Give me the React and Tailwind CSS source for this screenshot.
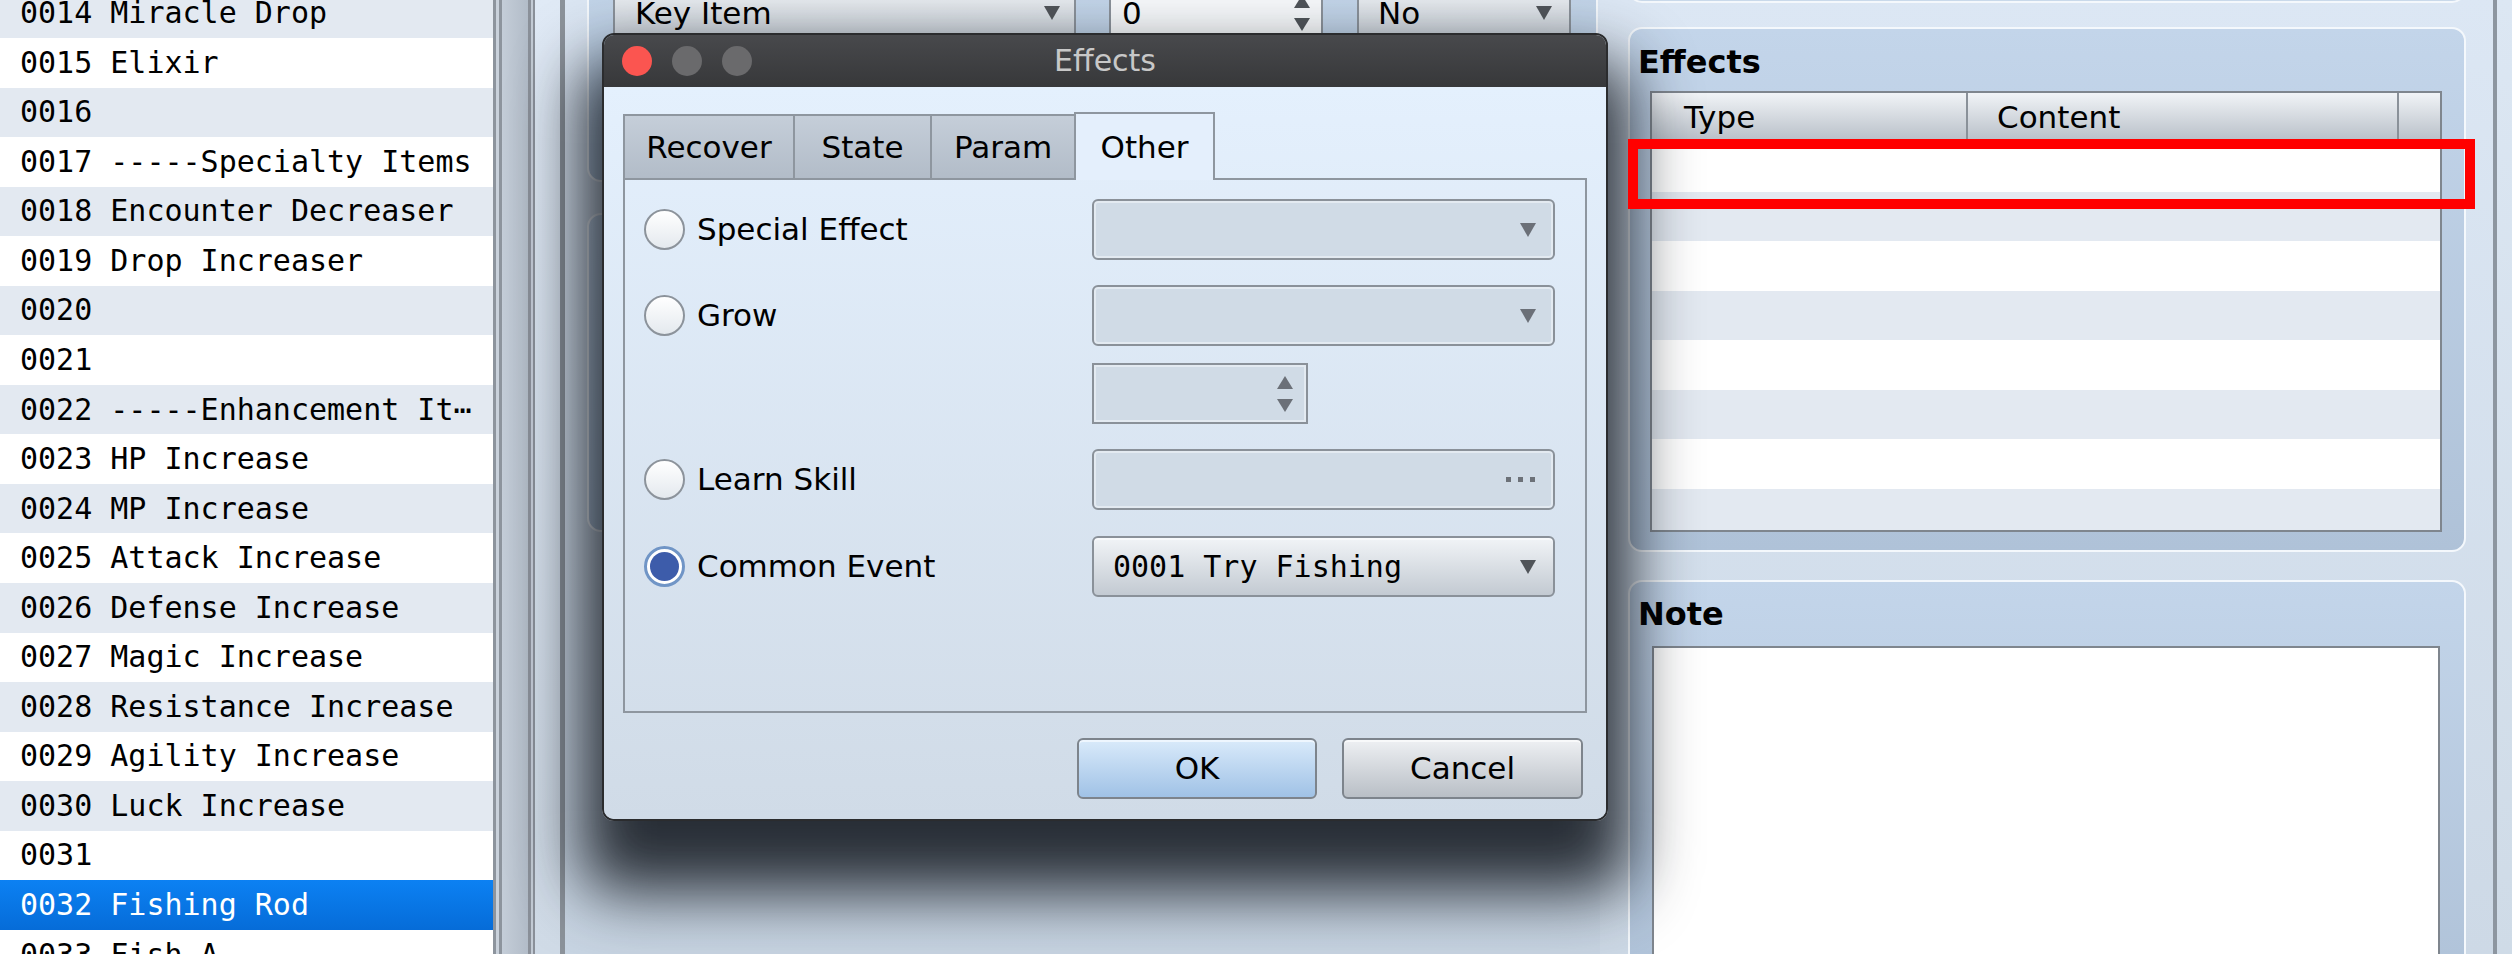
import React from "react";

// Fuentes de la interfaz
const SANS = "font-['DejaVu_Sans',sans-serif]";
const MONO = "font-['DejaVu_Sans_Mono',monospace]";

const ITEMS = [
  ["0014", "Miracle Drop"],
  ["0015", "Elixir"],
  ["0016", ""],
  ["0017", "-----Specialty Items"],
  ["0018", "Encounter Decreaser"],
  ["0019", "Drop Increaser"],
  ["0020", ""],
  ["0021", ""],
  ["0022", "-----Enhancement It⋯"],
  ["0023", "HP Increase"],
  ["0024", "MP Increase"],
  ["0025", "Attack Increase"],
  ["0026", "Defense Increase"],
  ["0027", "Magic Increase"],
  ["0028", "Resistance Increase"],
  ["0029", "Agility Increase"],
  ["0030", "Luck Increase"],
  ["0031", ""],
  ["0032", "Fishing Rod"],
  ["0033", "Fish A"],
];

const SELECTED = "0032";

function Arrow({ dir = "down", color = "#505459" }) {
  return (
    <svg width="18" height="16" viewBox="0 0 18 16" className="shrink-0">
      <polygon points={dir === "down" ? "1,1 17,1 9,15" : "9,1 17,15 1,15"} fill={color} />
    </svg>
  );
}

function SpinArrows({ color = "#60656c" }) {
  return (
    <div className="flex flex-col items-center gap-[10px]">
      <svg width="16" height="13" viewBox="0 0 16 13">
        <polygon points="8,0 16,13 0,13" fill={color} />
      </svg>
      <svg width="16" height="13" viewBox="0 0 16 13">
        <polygon points="0,0 16,0 8,13" fill={color} />
      </svg>
    </div>
  );
}

function ItemList() {
  return (
    <div className="w-[493px] shrink-0 h-full bg-white overflow-hidden">
      <div className="-mt-[11.6px]">
        {ITEMS.map(([id, name], i) => {
          const selected = id === SELECTED;
          const rowClass = selected
            ? "bg-linear-to-b from-[#0c81f3] to-[#066cd8] text-white"
            : i % 2 === 0
            ? "bg-[#e3e9f1] text-black"
            : "bg-white text-black";
          return (
            <div
              key={id}
              className={`h-[49.55px] flex items-center pl-[20px] ${MONO} text-[30px] leading-none whitespace-pre ${rowClass}`}
            >
              {name ? `${id} ${name}` : id}
            </div>
          );
        })}
      </div>
    </div>
  );
}

function Splitter() {
  return (
    <div className="flex shrink-0 h-full">
      <div className="w-[3px] bg-[#8d949d]" />
      <div className="w-[3px] bg-[#c9d1db]" />
      <div className="w-[3px] bg-[#8d949d]" />
      <div className="w-[26px] bg-linear-to-r from-[#c4cdd8] to-[#b2bcc8]" />
      <div className="w-[3px] bg-[#8a9099]" />
      <div className="w-[2px] bg-[#c3cbd5]" />
      <div className="w-[2px] bg-[#8a9099]" />
      <div className="w-[25px] bg-linear-to-b from-[#e0eaf6] to-[#d0dbe7]" />
      <div className="w-[5px] bg-[#8c939b]" />
    </div>
  );
}

function CenterPane() {
  return (
    <div className="w-[1035px] shrink-0 h-full bg-linear-to-b from-[#dbe6f3] to-[#c8d5e3] pl-[22px] pr-[2px] flex flex-col">
      <div className="-mt-[40px] h-[222px] shrink-0 rounded-[14px] border-2 border-[#f4f8fc] bg-linear-to-b from-[#c5d7eb] to-[#b3c6db] pt-[21px] pl-[24px] flex items-start">
        <div className="w-[463px] h-[60px] rounded-[6px] border-2 border-[#8a9199] bg-linear-to-b from-[#f1f4f7] to-[#c5ccd4] flex items-center justify-between pl-[20px] pr-[13px] text-[31px] leading-none">
          <span>Key Item</span>
          <Arrow />
        </div>
        <div className="ml-[33px] w-[214px] h-[60px] border-2 border-[#8a9199] bg-[#f6f8fa] flex items-center justify-between pl-[11px] pr-[11px] text-[31px] leading-none">
          <span>0</span>
          <SpinArrows color="#505459" />
        </div>
        <div className="ml-[34px] w-[214px] h-[60px] rounded-[6px] border-2 border-[#8a9199] bg-linear-to-b from-[#f1f4f7] to-[#c5ccd4] flex items-center justify-between pl-[19px] pr-[16px] text-[31px] leading-none">
          <span>No</span>
          <Arrow />
        </div>
      </div>
      <div className="mt-[31px] h-[319px] shrink-0 rounded-[14px] border-2 border-[#f4f8fc] bg-linear-to-b from-[#c5d7eb] to-[#b3c6db]" />
    </div>
  );
}

function RightPane() {
  const rows = [0, 1, 2, 3, 4, 5, 6, 7];
  return (
    <div className="w-[893px] shrink-0 h-full bg-linear-to-b from-[#dce7f4] to-[#cdd9e6] pl-[28px] pr-[27px] flex flex-col">
      <div className="-mt-[37px] h-[40px] shrink-0 rounded-[14px] border-2 border-[#f4f8fc] bg-[#c9d9ea]" />

      {/* Effects */}
      <div className="mt-[24px] h-[525px] shrink-0 rounded-[14px] border-2 border-[#f4f8fc] bg-linear-to-b from-[#c3d5ea] to-[#afc2d8] pt-[17px] flex flex-col">
        <div className="pl-[8px] text-[32px] leading-none font-bold">Effects</div>
        <div className="mt-[13px] ml-[20px] w-[792px] h-[441px] shrink-0 border-2 border-[#7f868e] bg-white overflow-hidden flex flex-col">
          <div className="h-[49px] shrink-0 flex bg-linear-to-b from-[#f1f4f7] to-[#b7bec7] text-[31px] leading-none">
            <div className="w-[316px] shrink-0 border-r-2 border-[#8a9199] flex items-center pl-[32px]">Type</div>
            <div className="w-[431px] shrink-0 border-r-2 border-[#8a9199] flex items-center pl-[29px]">Content</div>
            <div className="flex-1" />
          </div>
          {rows.map((r) => (
            <div
              key={r}
              className={`h-[49.5px] shrink-0 ${r % 2 === 0 ? "bg-white" : "bg-[#e3e9f1]"}`}
            />
          ))}
        </div>
      </div>

      {/* Note */}
      <div className="mt-[28px] h-[420px] shrink-0 rounded-[14px] border-2 border-[#f4f8fc] bg-linear-to-b from-[#c3d5ea] to-[#afc2d8] pt-[16px] flex flex-col">
        <div className="pl-[8px] text-[32px] leading-none font-bold">Note</div>
        <div className="mt-[16px] ml-[22px] w-[788px] flex-1 border-2 border-[#7f868e] bg-white" />
      </div>
    </div>
  );
}

function Radio({ checked }) {
  if (checked) {
    return (
      <div className="w-[41px] h-[41px] shrink-0 rounded-full border-[3px] border-[#7095c6] bg-white p-[3px]">
        <div className="w-full h-full rounded-full bg-[#3d5caa]" />
      </div>
    );
  }
  return (
    <div className="w-[41px] h-[41px] shrink-0 rounded-full border-2 border-[#8c939b] bg-linear-to-b from-[#ffffff] to-[#e4e9ee]" />
  );
}

function RadioRow({ label, checked, className, children }) {
  return (
    <div className={`flex items-center shrink-0 ${className}`}>
      <div className="w-[467px] shrink-0 flex items-center pl-[19px]">
        {label && (
          <>
            <Radio checked={checked} />
            <span className="ml-[12px] text-[31px] leading-none">{label}</span>
          </>
        )}
      </div>
      {children}
    </div>
  );
}

const DISABLED_BOX =
  "h-[61px] rounded-[6px] border-2 border-[#8a9199] bg-[#d0dbe6] shadow-[inset_0_0_0_2px_#e3eaf1]";

function EffectsDialog() {
  return (
    <div className="absolute left-[602px] top-[33px] w-[1006px] h-[788px] rounded-[12px] border-2 border-[#2b2c2e] overflow-hidden flex flex-col shadow-[0_50px_64px_22px_rgba(12,16,24,0.85)]">
      <div className="relative h-[52px] shrink-0 bg-linear-to-b from-[#48494c] to-[#37383a] flex items-center pl-[18px] gap-[20px]">
        <span className="w-[30px] h-[30px] rounded-full bg-[#fb5550]" />
        <span className="w-[30px] h-[30px] rounded-full bg-[#6a6a6c]" />
        <span className="w-[30px] h-[30px] rounded-full bg-[#6a6a6c]" />
        <div className="absolute inset-0 flex items-center justify-center text-[30px] leading-none text-[#c8c8c8]">
          Effects
        </div>
      </div>

      <div className="flex-1 bg-linear-to-b from-[#e4f0fd] to-[#d0dbe7] px-[19px] pt-[25px] flex flex-col">
        {/* Pestañas */}
        <div className="flex items-end h-[66px] shrink-0 text-[31px] leading-none">
          <div className="w-[172px] h-[64px] border-2 border-b-0 border-[#8e969f] bg-linear-to-b from-[#c5ced9] to-[#b2bcc8] flex items-center justify-center">
            Recover
          </div>
          <div className="-ml-[2px] w-[139px] h-[64px] border-2 border-b-0 border-[#8e969f] bg-linear-to-b from-[#c5ced9] to-[#b2bcc8] flex items-center justify-center">
            State
          </div>
          <div className="-ml-[2px] w-[146px] h-[64px] border-2 border-b-0 border-[#8e969f] bg-linear-to-b from-[#c5ced9] to-[#b2bcc8] flex items-center justify-center">
            Param
          </div>
          <div className="relative z-10 -ml-[2px] -mb-[2px] w-[141px] h-[68px] border-2 border-b-0 border-[#8e969f] bg-[#e4effc] flex items-center justify-center">
            Other
          </div>
        </div>

        {/* Panel de la pestaña Other */}
        <div className="h-[535px] shrink-0 border-2 border-[#8e969f] flex flex-col">
          <RadioRow label="Special Effect" className="mt-[19px]">
            <div className={`w-[463px] ${DISABLED_BOX} flex items-center justify-end pr-[16px]`}>
              <Arrow color="#6b7078" />
            </div>
          </RadioRow>
          <RadioRow label="Grow" className="mt-[25px]">
            <div className={`w-[463px] ${DISABLED_BOX} flex items-center justify-end pr-[16px]`}>
              <Arrow color="#6b7078" />
            </div>
          </RadioRow>
          <RadioRow className="mt-[17px]">
            <div className="w-[216px] h-[61px] border-2 border-[#8a9199] bg-[#d0dbe6] shadow-[inset_0_0_0_2px_#e3eaf1] flex items-center justify-end pr-[13px]">
              <SpinArrows color="#6b7078" />
            </div>
          </RadioRow>
          <RadioRow label="Learn Skill" className="mt-[25px]">
            <div className={`w-[463px] ${DISABLED_BOX} flex items-center justify-end gap-[7px] pr-[18px]`}>
              <span className="w-[5px] h-[5px] bg-[#6c7178]" />
              <span className="w-[5px] h-[5px] bg-[#6c7178]" />
              <span className="w-[5px] h-[5px] bg-[#6c7178]" />
            </div>
          </RadioRow>
          <RadioRow label="Common Event" checked className="mt-[26px]">
            <div className="w-[463px] h-[61px] rounded-[6px] border-2 border-[#8a9199] bg-linear-to-b from-[#f1f4f7] to-[#c3cad2] shadow-[inset_0_2px_0_#f8fafc] flex items-center justify-between pl-[19px] pr-[16px]">
              <span className={`${MONO} text-[30px] leading-none whitespace-pre`}>0001 Try Fishing</span>
              <Arrow />
            </div>
          </RadioRow>
        </div>

        {/* Botones */}
        <div className="mt-[25px] flex justify-end gap-[25px] pr-[4px] text-[31px] leading-none">
          <div className="w-[240px] h-[61px] rounded-[6px] border-2 border-[#7d848c] bg-linear-to-b from-[#d9eafa] to-[#a0c2e6] shadow-[inset_0_2px_0_#eef6fe] flex items-center justify-center">
            OK
          </div>
          <div className="w-[241px] h-[61px] rounded-[6px] border-2 border-[#7d848c] bg-linear-to-b from-[#eef0f3] to-[#b9bfc6] shadow-[inset_0_2px_0_#f8f9fa] flex items-center justify-center">
            Cancel
          </div>
        </div>
      </div>
    </div>
  );
}

export default function App() {
  return (
    <div className={`relative w-[2512px] h-[954px] overflow-hidden flex ${SANS} text-black`}>
      <ItemList />
      <Splitter />
      <CenterPane />
      <RightPane />
      <div className="flex shrink-0 w-[19px] h-full">
        <div className="w-[4px] bg-[#8d96a0]" />
        <div className="flex-1 bg-linear-to-b from-[#dce7f3] to-[#cfdbe7]" />
      </div>

      <EffectsDialog />

      {/* Marco rojo de resaltado */}
      <div className="absolute left-[1628px] top-[139px] w-[847px] h-[70px] border-[10px] border-[#ff0000]" />
    </div>
  );
}
